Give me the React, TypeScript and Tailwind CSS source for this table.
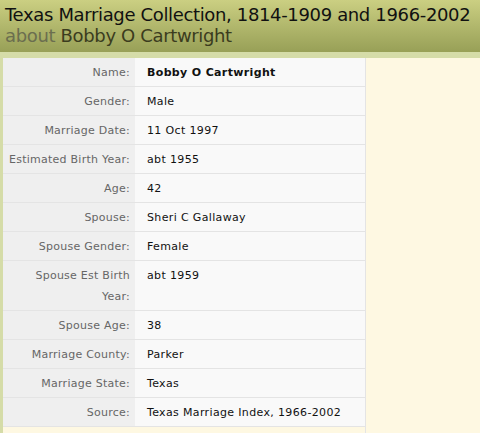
const rows: { label: string; value: string; bold?: boolean }[] = [
  { label: "Name:", value: "Bobby O Cartwright", bold: true },
  { label: "Gender:", value: "Male" },
  { label: "Marriage Date:", value: "11 Oct 1997" },
  { label: "Estimated Birth Year:", value: "abt 1955" },
  { label: "Age:", value: "42" },
  { label: "Spouse:", value: "Sheri C Gallaway" },
  { label: "Spouse Gender:", value: "Female" },
  { label: "Spouse Est Birth Year:", value: "abt 1959" },
  { label: "Spouse Age:", value: "38" },
  { label: "Marriage County:", value: "Parker" },
  { label: "Marriage State:", value: "Texas" },
  { label: "Source:", value: "Texas Marriage Index, 1966-2002" },
];

export default function App() {
  return (
    <div className="w-[480px] h-[433px] overflow-hidden bg-[#fef8e2] font-['DejaVu_Sans',sans-serif]">
      {/* header band */}
      <div className="h-[52px] bg-gradient-to-b from-[#cbcf82] to-[#98a057] px-[5px] pt-[4px] text-[18px] leading-[21px] tracking-[-0.35px]">
        <div className="text-[#111] whitespace-nowrap">Texas Marriage Collection, 1814-1909 and 1966-2002</div>
        <div className="whitespace-nowrap">
          <span className="text-[#6b6e4f]">about</span>{" "}
          <span className="text-[#3b3c1e]">Bobby O Cartwright</span>
        </div>
      </div>
      <div className="h-[6px] bg-[#d5dca8]" />

      <div className="flex">
        <div className="w-[3px] h-[375px] bg-[#d5dca8]" />
        <div className="w-[363px] border-r border-[#e4e4e4] text-[11px] leading-[21px]">
          {rows.map((r) => (
            <div key={r.label} className="flex border-b border-[#e4e4e4]">
              <div className="w-[132px] shrink-0 bg-[#efefef] text-right text-[#666] tracking-[0.25px] pr-[5px] pl-[1px] pt-[4px] pb-[3px]">
                {r.label}
              </div>
              <div
                className={`flex-1 bg-[#f9f9f9] pl-[12px] pr-2 pt-[4px] pb-[3px] text-[#111] tracking-[0.35px] ${
                  r.bold ? "font-bold" : ""
                }`}
              >
                {r.value}
              </div>
            </div>
          ))}
        </div>
      </div>
    </div>
  );
}
